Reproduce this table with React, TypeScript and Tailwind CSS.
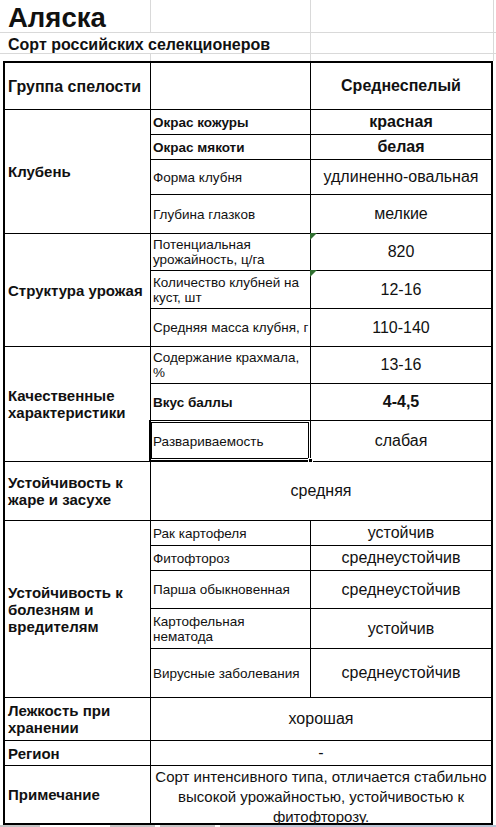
import React from "react";

const L = "border-r border-b border-black flex items-center pl-[3px] font-bold text-[15px] leading-[17px] whitespace-nowrap";
const M = "border-r border-b border-black flex items-center pl-[2px] text-[13.5px] leading-[15px] whitespace-nowrap";
const MB = M + " font-bold";
const V = "border-b border-black flex items-center justify-center text-[16px] leading-[18px] whitespace-nowrap";
const VB = V + " font-bold";
const W = "col-span-2 border-b border-black flex items-center justify-center text-[16px] leading-[18px]";

function Tri() {
  return (
    <svg className="absolute left-[-1px] top-[-1px]" width="7" height="7" viewBox="0 0 7 7">
      <polygon points="0,0 7,0 0,7" fill="#2f6e2f" />
    </svg>
  );
}

export default function App() {
  return (
    <div
      className="w-[496px] h-[827px] bg-white overflow-hidden text-[#111]"
      style={{ fontFamily: '"Liberation Sans", Arial, sans-serif' }}
    >
      {/* spreadsheet header area */}
      <div className="grid grid-cols-[151px_160px_183px_2px] grid-rows-[33px_21px_7px]">
        <div className="border-r border-b border-[#d9d9d9] pl-[8px] text-[27.5px] font-bold leading-[36px] whitespace-nowrap">
          Аляска
        </div>
        <div className="border-r border-b border-[#d9d9d9]" />
        <div className="border-r border-b border-[#d9d9d9]" />
        <div className="border-b border-[#d9d9d9]" />

        <div className="col-span-2 border-r border-b border-[#d9d9d9] pl-[8px] text-[16px] font-bold leading-[24px] whitespace-nowrap">
          Сорт российских селекционеров
        </div>
        <div className="border-r border-b border-[#d9d9d9]" />
        <div className="border-b border-[#d9d9d9]" />

        <div className="border-r border-[#d9d9d9]" />
        <div className="border-r border-[#d9d9d9]" />
        <div className="border-r border-[#d9d9d9]" />
        <div />
      </div>

      {/* table */}
      <div className="ml-[3px] w-[490px] border-2 border-black">
        <div className="grid grid-cols-[146px_160px_180px] grid-rows-[47px_25px_25px_35px_39px_37px_38px_38px_37px_37px_41px_59px_25px_25px_38px_40px_49px_43px_25px_57px]">
          <div className={L + " text-[16px]"}>Группа спелости</div>
          <div className="border-r border-b border-black" />
          <div className={VB}>Среднеспелый</div>

          <div className={L + " row-span-4"}>Клубень</div>
          <div className={MB}>Окрас кожуры</div>
          <div className={VB}>красная</div>
          <div className={MB}>Окрас мякоти</div>
          <div className={VB}>белая</div>
          <div className={M}>Форма клубня</div>
          <div className={V}>удлиненно-овальная</div>
          <div className={M}>Глубина глазков</div>
          <div className={V}>мелкие</div>

          <div className={L + " row-span-3"}>Структура урожая</div>
          <div className={M}>
            Потенциальная
            <br />
            урожайность, ц/га
          </div>
          <div className={V + " relative"}>
            <Tri />
            820
          </div>
          <div className={M}>
            Количество клубней на
            <br />
            куст, шт
          </div>
          <div className={V + " relative"}>
            <Tri />
            12-16
          </div>
          <div className={M}>Средняя масса клубня, г</div>
          <div className={V}>110-140</div>

          <div className={L + " row-span-3"}>
            Качественные
            <br />
            характеристики
          </div>
          <div className={M}>
            Содержание крахмала,
            <br />%
          </div>
          <div className={V}>13-16</div>
          <div className={MB}>Вкус баллы</div>
          <div className={VB}>4-4,5</div>
          <div className={M + " relative"}>
            Развариваемость
            <div className="absolute left-[-2px] top-[-1px] right-[-1px] bottom-0 border-[3px] border-double border-black" />
            <div className="absolute right-[-3px] bottom-[-2px] w-[5px] h-[5px] bg-black border border-white" />
          </div>
          <div className={V}>слабая</div>

          <div className={L}>
            Устойчивость к
            <br />
            жаре и засухе
          </div>
          <div className={W}>средняя</div>

          <div className={L + " row-span-5"}>
            Устойчивость к
            <br />
            болезням и
            <br />
            вредителям
          </div>
          <div className={M}>Рак картофеля</div>
          <div className={V}>устойчив</div>
          <div className={M}>Фитофтороз</div>
          <div className={V}>среднеустойчив</div>
          <div className={M}>Парша обыкновенная</div>
          <div className={V}>среднеустойчив</div>
          <div className={M}>
            Картофельная
            <br />
            нематода
          </div>
          <div className={V}>устойчив</div>
          <div className={M}>Вирусные заболевания</div>
          <div className={V}>среднеустойчив</div>

          <div className={L}>
            Лежкость при
            <br />
            хранении
          </div>
          <div className={W}>хорошая</div>

          <div className={L}>Регион</div>
          <div className={W}>-</div>

          <div className="border-r border-black flex items-center pl-[3px] font-bold text-[15px] leading-[17px]">
            Примечание
          </div>
          <div className="col-span-2 pt-[1px] text-center text-[15px] leading-[20px] whitespace-nowrap">
            Сорт интенсивного типа, отличается стабильно
            <br />
            высокой урожайностью, устойчивостью к
            <br />
            фитофторозу.
          </div>
        </div>
      </div>

      {/* bottom strip */}
      <div className="flex h-[2px]">
        <div className="w-[40px] bg-[#c4c4c4]" />
        <div className="w-[70px] bg-white" />
        <div className="w-[45px] bg-[#c4c4c4]" />
        <div className="w-[5px] bg-white" />
        <div className="w-[55px] bg-[#c4c4c4]" />
        <div className="w-[5px] bg-white" />
        <div className="w-[30px] bg-[#c4c4c4]" />
        <div className="flex-1 bg-[#b8c4d4]" />
      </div>
    </div>
  );
}
